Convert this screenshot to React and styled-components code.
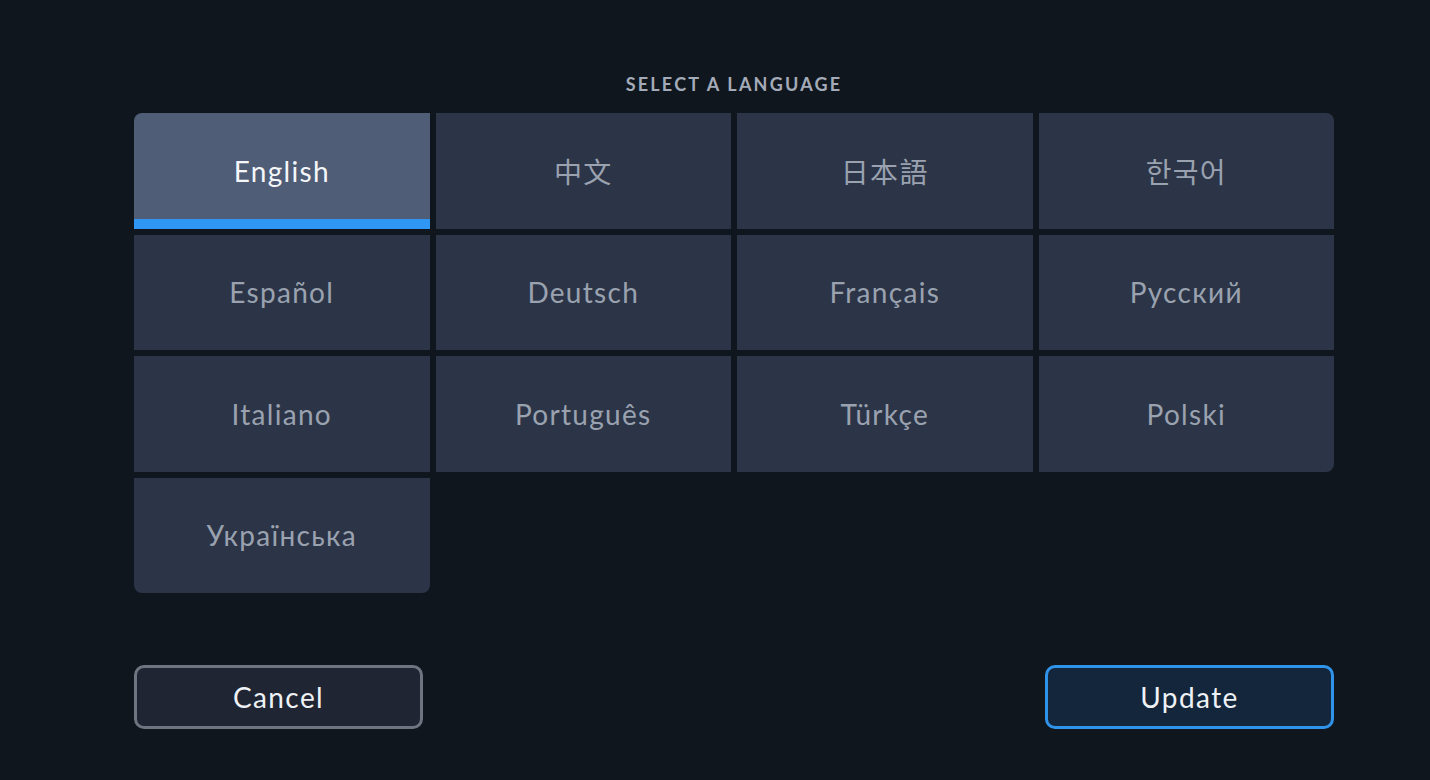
import React, { useState } from "react";
import styled, { createGlobalStyle, css } from "styled-components";

const COLS = 4;

const languages = [
  "English",
  "中文",
  "日本語",
  "한국어",
  "Español",
  "Deutsch",
  "Français",
  "Русский",
  "Italiano",
  "Português",
  "Türkçe",
  "Polski",
  "Українська",
];

const GlobalStyle = createGlobalStyle`
  html, body {
    margin: 0;
    padding: 0;
    background: #10161e;
  }
  body {
    font-family: Lato, "Noto Sans", "Noto Sans CJK SC", sans-serif;
    -webkit-font-smoothing: antialiased;
  }
`;

// where a cell touches no neighbour, its corner gets rounded
const cornersFor = (i, n) => {
  const row = Math.floor(i / COLS);
  const col = i % COLS;
  const above = row > 0;
  const below = i + COLS < n;
  const left = col > 0;
  const right = col < COLS - 1 && i + 1 < n;
  const r = (on) => (on ? "8px" : "0");
  return [
    r(!above && !left),
    r(!above && !right),
    r(!below && !right),
    r(!below && !left),
  ].join(" ");
};

const App = () => {
  const [selected, setSelected] = useState("English");

  return (
    <>
      <GlobalStyle />
      <Page>
        <Title>Select a language</Title>
        <Grid>
          {languages.map((lang, i) => (
            <Cell
              key={lang}
              $active={lang === selected}
              $corners={cornersFor(i, languages.length)}
              onClick={() => setSelected(lang)}
            >
              {lang}
            </Cell>
          ))}
        </Grid>
        <Actions>
          <Button>Cancel</Button>
          <Button $primary>Update</Button>
        </Actions>
      </Page>
    </>
  );
};

export default App;

const Page = styled.div`
  width: 1200px;
  height: 780px;
  box-sizing: border-box;
  margin-left: 134px;
  padding-top: 74px;
  display: flex;
  flex-direction: column;
`;

const Title = styled.h2`
  margin: 0 0 19px;
  text-align: center;
  font-size: 18px;
  line-height: 20px;
  font-weight: 700;
  letter-spacing: 2.2px;
  text-transform: uppercase;
  color: #a4abb8;
`;

const Grid = styled.div`
  display: grid;
  grid-template-columns: repeat(${COLS}, 1fr);
  grid-auto-rows: 115.5px;
  gap: 6px;
`;

const Cell = styled.button`
  border: none;
  margin: 0;
  padding: 0;
  cursor: pointer;
  border-radius: ${(p) => p.$corners};
  background: #2c3547;
  color: #9aa2b0;
  font-family: Lato, "Noto Sans CJK SC", "Noto Sans CJK JP", "Noto Sans CJK KR", sans-serif;
  font-size: 28px;
  font-weight: 400;
  letter-spacing: 1.3px;
  display: flex;
  align-items: center;
  justify-content: center;

  ${(p) =>
    p.$active &&
    css`
      background: #4f5d76;
      color: #f4f6f9;
      box-shadow: inset 0 -10px 0 #2f96f3;
    `}
`;

const Actions = styled.div`
  margin-top: 72px;
  display: flex;
  justify-content: space-between;
`;

const Button = styled.button`
  width: 289px;
  height: 64px;
  box-sizing: border-box;
  border-radius: 10px;
  border: 3px solid ${(p) => (p.$primary ? "#2f93ea" : "#6e7581")};
  background: ${(p) => (p.$primary ? "#13263c" : "#1f2532")};
  color: #eef1f5;
  font-family: Lato, "Noto Sans", sans-serif;
  font-size: 28px;
  letter-spacing: 1.4px;
  cursor: pointer;
`;
